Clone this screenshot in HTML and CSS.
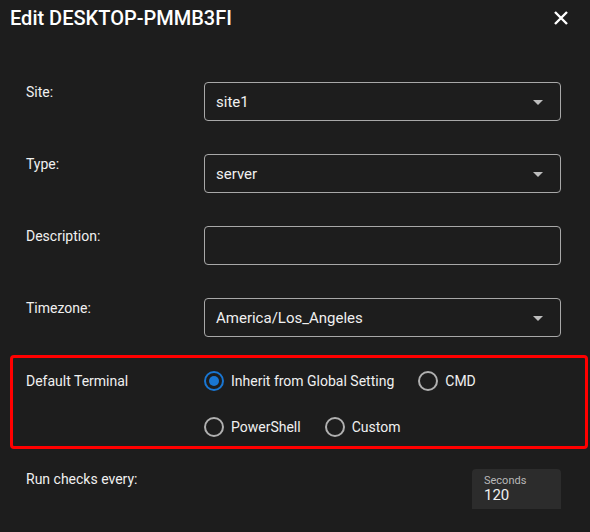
FILE: index.html
```html
<!DOCTYPE html>
<html lang="en">
<head>
    <meta charset="UTF-8">
    <meta name="viewport" content="width=device-width, initial-scale=1.0">
    <title>Edit DESKTOP-PMMB3FI</title>
    <link rel="stylesheet" href="styles.css">
</head>
<body>
    <div class="dialog">
        <div class="header">
            <div class="title">Edit DESKTOP-PMMB3FI</div>
            <button class="close" type="button" aria-label="Close">
                <svg width="14" height="14" viewBox="0 0 14 14">
                    <path d="M1 1 L13 13 M13 1 L1 13" stroke="#fff" stroke-width="2.4" fill="none"/>
                </svg>
            </button>
        </div>

        <div class="row">
            <div class="label">Site:</div>
            <div class="field select">
                <span>site1</span>
                <span class="arrow"></span>
            </div>
        </div>

        <div class="row">
            <div class="label">Type:</div>
            <div class="field select">
                <span>server</span>
                <span class="arrow"></span>
            </div>
        </div>

        <div class="row">
            <div class="label">Description:</div>
            <div class="field"></div>
        </div>

        <div class="row">
            <div class="label">Timezone:</div>
            <div class="field select">
                <span>America/Los_Angeles</span>
                <span class="arrow"></span>
            </div>
        </div>

        <div class="terminal">
            <div class="label">Default Terminal</div>
            <div class="options">
                <label class="radio"><span class="dot checked"></span>Inherit from Global Setting</label>
                <label class="radio"><span class="dot"></span>CMD</label>
                <label class="radio"><span class="dot"></span>PowerShell</label>
                <label class="radio"><span class="dot"></span>Custom</label>
            </div>
        </div>

        <div class="row checks">
            <div class="label">Run checks every:</div>
            <div class="spacer"></div>
            <div class="seconds">
                <div class="small">Seconds</div>
                <div class="value">120</div>
            </div>
        </div>
    </div>
</body>
</html>
```

FILE: styles.css
```css
body {
    margin: 0;
    background-color: #1d1d1d;
    font-family: Roboto, "Liberation Sans", sans-serif;
    color: #f0f0f0;
}
.dialog {
    width: 590px;
    height: 532px;
    overflow: hidden;
}
.header {
    display: flex;
    align-items: center;
    justify-content: space-between;
    padding: 1px 22px 0 10px;
    height: 33px;
}
.title {
    font-size: 20px;
    font-weight: 500;
    color: #fff;
}
.close {
    background: none;
    border: none;
    padding: 0;
    width: 14px;
    height: 14px;
    display: flex;
    margin-top: 1px;
}
.row {
    display: flex;
    padding-left: 26px;
    margin-top: 48px;
}
.row + .row {
    margin-top: 33px;
}
.label {
    width: 178px;
    flex-shrink: 0;
    font-size: 14px;
    padding-top: 2px;
}
.field {
    width: 357px;
    height: 39px;
    box-sizing: border-box;
    border: 1px solid #a8a8a8;
    border-radius: 4px;
    display: flex;
    align-items: center;
    justify-content: space-between;
    padding: 0 17px 0 11px;
    font-size: 15px;
}
.arrow {
    width: 0;
    height: 0;
    border-left: 5.5px solid transparent;
    border-right: 5.5px solid transparent;
    border-top: 5px solid #bdbdbd;
    margin-top: 2px;
}
.terminal {
    display: flex;
    margin: 18px 2px 0 10px;
    height: 94px;
    box-sizing: border-box;
    border: 3px solid #ff0000;
    border-radius: 4px;
    padding: 13px 0 0 13px;
}
.terminal .label {
    font-size: 14px;
    padding-top: 2px;
}
.options {
    display: flex;
    flex-wrap: wrap;
    align-content: flex-start;
    width: 320px;
    column-gap: 24px;
    row-gap: 26px;
}
.radio {
    display: flex;
    align-items: center;
    font-size: 14px;
    height: 20px;
}
.dot {
    width: 20px;
    height: 20px;
    box-sizing: border-box;
    border: 2px solid #b0b0b0;
    border-radius: 50%;
    margin-right: 7px;
    position: relative;
}
.dot.checked {
    border-color: #1976d2;
}
.dot.checked::after {
    content: "";
    position: absolute;
    left: 3px;
    top: 3px;
    width: 10px;
    height: 10px;
    border-radius: 50%;
    background-color: #1976d2;
}
.row.checks {
    margin-top: 20px;
}
.checks .label {
    padding-top: 2px;
}
.spacer {
    flex: 1;
}
.seconds {
    width: 89px;
    height: 40px;
    margin-right: 29px;
    box-sizing: border-box;
    background-color: #2c2c2c;
    border-radius: 4px 4px 0 0;
    padding: 5px 12px 0;
}
.small {
    font-size: 11px;
    color: #b8b8b8;
    line-height: 13px;
}
.value {
    font-size: 15px;
    line-height: 17px;
}
```
